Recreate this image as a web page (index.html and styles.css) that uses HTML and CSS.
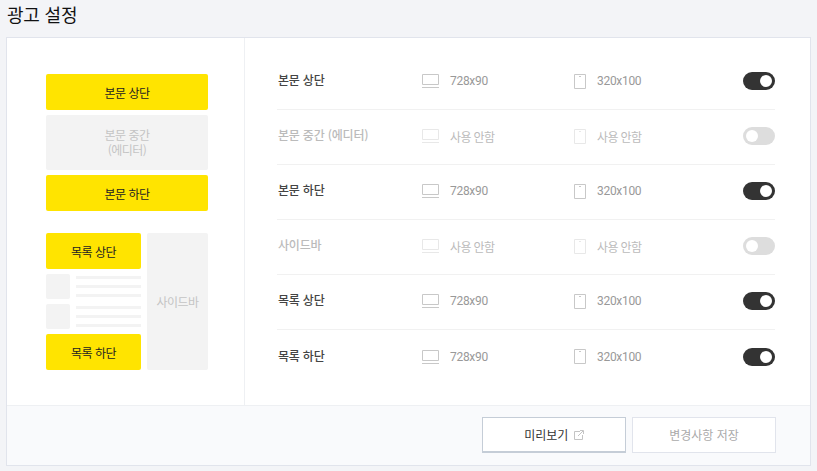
FILE: index.html
```html
<!DOCTYPE html>
<html lang="ko">
<head>
    <meta charset="UTF-8">
    <meta name="viewport" content="width=device-width, initial-scale=1.0">
    <title>광고 설정</title>
    <link rel="stylesheet" href="styles.css">
</head>
<body>
    <h1 class="page-title">광고 설정</h1>
    <div class="card">
        <div class="card-body">
            <div class="preview">
                <div class="slot slot-on">본문 상단</div>
                <div class="slot slot-off slot-tall">본문 중간<br>(에디터)</div>
                <div class="slot slot-on">본문 하단</div>
                <div class="preview-list">
                    <div class="list-col">
                        <div class="slot slot-on">목록 상단</div>
                        <div class="list-item">
                            <div class="thumb"></div>
                            <div class="lines"><span></span><span></span><span></span></div>
                        </div>
                        <div class="list-item">
                            <div class="thumb"></div>
                            <div class="lines"><span></span><span></span><span></span></div>
                        </div>
                        <div class="slot slot-on">목록 하단</div>
                    </div>
                    <div class="slot slot-off slot-side">사이드바</div>
                </div>
            </div>
            <div class="settings">
                <div class="row">
                    <div class="row-name">본문 상단</div>
                    <div class="size size-pc">
                        <svg class="icon" width="17" height="14" viewBox="0 0 17 14"><path d="M.5.5h16v10H.5z" fill="none" stroke="#c8c8c8"/><path d="M0 13.5h17" stroke="#c8c8c8"/></svg>
                        728x90
                    </div>
                    <div class="size size-mobile">
                        <svg class="icon" width="12" height="15" viewBox="0 0 12 15"><path d="M.5.5h11v14H.5z" fill="none" stroke="#c8c8c8"/><path d="M5 2.5h2" stroke="#c8c8c8"/></svg>
                        320x100
                    </div>
                    <div class="toggle toggle-on"></div>
                </div>
                <div class="row row-off">
                    <div class="row-name">본문 중간 (에디터)</div>
                    <div class="size size-pc">
                        <svg class="icon" width="17" height="14" viewBox="0 0 17 14"><path d="M.5.5h16v10H.5z" fill="none" stroke="#c8c8c8"/><path d="M0 13.5h17" stroke="#c8c8c8"/></svg>
                        사용 안함
                    </div>
                    <div class="size size-mobile">
                        <svg class="icon" width="12" height="15" viewBox="0 0 12 15"><path d="M.5.5h11v14H.5z" fill="none" stroke="#c8c8c8"/><path d="M5 2.5h2" stroke="#c8c8c8"/></svg>
                        사용 안함
                    </div>
                    <div class="toggle"></div>
                </div>
                <div class="row">
                    <div class="row-name">본문 하단</div>
                    <div class="size size-pc">
                        <svg class="icon" width="17" height="14" viewBox="0 0 17 14"><path d="M.5.5h16v10H.5z" fill="none" stroke="#c8c8c8"/><path d="M0 13.5h17" stroke="#c8c8c8"/></svg>
                        728x90
                    </div>
                    <div class="size size-mobile">
                        <svg class="icon" width="12" height="15" viewBox="0 0 12 15"><path d="M.5.5h11v14H.5z" fill="none" stroke="#c8c8c8"/><path d="M5 2.5h2" stroke="#c8c8c8"/></svg>
                        320x100
                    </div>
                    <div class="toggle toggle-on"></div>
                </div>
                <div class="row row-off">
                    <div class="row-name">사이드바</div>
                    <div class="size size-pc">
                        <svg class="icon" width="17" height="14" viewBox="0 0 17 14"><path d="M.5.5h16v10H.5z" fill="none" stroke="#c8c8c8"/><path d="M0 13.5h17" stroke="#c8c8c8"/></svg>
                        사용 안함
                    </div>
                    <div class="size size-mobile">
                        <svg class="icon" width="12" height="15" viewBox="0 0 12 15"><path d="M.5.5h11v14H.5z" fill="none" stroke="#c8c8c8"/><path d="M5 2.5h2" stroke="#c8c8c8"/></svg>
                        사용 안함
                    </div>
                    <div class="toggle"></div>
                </div>
                <div class="row">
                    <div class="row-name">목록 상단</div>
                    <div class="size size-pc">
                        <svg class="icon" width="17" height="14" viewBox="0 0 17 14"><path d="M.5.5h16v10H.5z" fill="none" stroke="#c8c8c8"/><path d="M0 13.5h17" stroke="#c8c8c8"/></svg>
                        728x90
                    </div>
                    <div class="size size-mobile">
                        <svg class="icon" width="12" height="15" viewBox="0 0 12 15"><path d="M.5.5h11v14H.5z" fill="none" stroke="#c8c8c8"/><path d="M5 2.5h2" stroke="#c8c8c8"/></svg>
                        320x100
                    </div>
                    <div class="toggle toggle-on"></div>
                </div>
                <div class="row">
                    <div class="row-name">목록 하단</div>
                    <div class="size size-pc">
                        <svg class="icon" width="17" height="14" viewBox="0 0 17 14"><path d="M.5.5h16v10H.5z" fill="none" stroke="#c8c8c8"/><path d="M0 13.5h17" stroke="#c8c8c8"/></svg>
                        728x90
                    </div>
                    <div class="size size-mobile">
                        <svg class="icon" width="12" height="15" viewBox="0 0 12 15"><path d="M.5.5h11v14H.5z" fill="none" stroke="#c8c8c8"/><path d="M5 2.5h2" stroke="#c8c8c8"/></svg>
                        320x100
                    </div>
                    <div class="toggle toggle-on"></div>
                </div>
            </div>
        </div>
        <div class="card-footer">
            <button class="btn btn-preview">미리보기
                <svg class="btn-icon" width="10" height="10" viewBox="0 0 10 10"><path d="M6 1.5H.5v8h8V5M4 6l5-5M6 .5h3.5V4" fill="none" stroke="#c4c4c4"/></svg>
            </button>
            <button class="btn btn-save">변경사항 저장</button>
        </div>
    </div>
</body>
</html>
```

FILE: styles.css
```css
* {
    box-sizing: border-box;
}

html,
body {
    height: 100%;
}

body {
    margin: 0;
    padding: 0 6px;
    background-color: #f3f4f7;
    font-family: "Noto Sans CJK KR", Roboto, sans-serif;
    overflow: hidden;
}

.page-title {
    margin: 0;
    padding-left: 1px;
    height: 37px;
    font-size: 18px;
    font-weight: 400;
    line-height: 28px;
    letter-spacing: -0.2px;
    color: #111;
}

.card {
    height: 429px;
    background-color: #fff;
    border: 1px solid #e1e4ec;
    display: flex;
    flex-direction: column;
}

.card-body {
    display: flex;
    height: 368px;
    border-bottom: 1px solid #eef0f3;
}

.preview {
    width: 238px;
    padding: 36px 36px 0 39px;
    border-right: 1px solid #eef0f3;
    display: flex;
    flex-direction: column;
    gap: 5px;
}

.slot {
    height: 36px;
    border-radius: 2px;
    display: flex;
    align-items: center;
    justify-content: center;
    text-align: center;
    font-size: 12px;
    line-height: 15px;
    letter-spacing: -0.5px;
}

.slot-on {
    background-color: #ffe400;
    color: #222;
}

.slot-off {
    background-color: #f3f3f3;
    color: #c4c4c4;
}

.slot-tall {
    height: 55px;
    padding-bottom: 2px;
}

.preview-list {
    display: flex;
    gap: 6px;
    margin-top: 17px;
}

.list-col {
    width: 95px;
    display: flex;
    flex-direction: column;
    gap: 5px;
}

.slot-side {
    width: 61px;
    height: 137px;
}

.list-item {
    display: flex;
    gap: 6px;
    height: 25px;
}

.thumb {
    width: 24px;
    height: 25px;
    border-radius: 2px;
    background-color: #f3f3f3;
}

.lines {
    flex: 1;
    padding-top: 2px;
    display: flex;
    flex-direction: column;
    gap: 6px;
}

.lines span {
    display: block;
    height: 3px;
    background-color: #f3f3f3;
}

.settings {
    flex: 1;
    padding: 17px 35px 0 32px;
}

.row {
    height: 55px;
    display: flex;
    align-items: center;
    border-bottom: 1px solid #f1f1f1;
    padding-bottom: 2px;
    font-size: 12px;
}

.row:last-child {
    border-bottom: none;
}

.row-name {
    width: 145px;
    padding-left: 1px;
    margin-top: -3px;
    font-weight: 500;
    letter-spacing: -0.2px;
    color: #444;
}

.size {
    display: flex;
    align-items: center;
    color: #999;
    letter-spacing: -0.3px;
    font-family: Roboto, "Noto Sans CJK KR", sans-serif;
}

.row-off .size {
    letter-spacing: -0.5px;
}

.size-pc {
    width: 152px;
}

.size-mobile {
    flex: 1;
}

.icon {
    flex-shrink: 0;
    margin-right: 11px;
}

.toggle {
    position: relative;
    width: 32px;
    height: 18px;
    border-radius: 9px;
    background-color: #ddd;
}

.toggle::after {
    content: "";
    position: absolute;
    top: 3px;
    left: 3px;
    width: 12px;
    height: 12px;
    border-radius: 50%;
    background-color: #fff;
}

.toggle-on {
    background-color: #333;
}

.toggle-on::after {
    left: auto;
    right: 3px;
}

.row-off .row-name,
.row-off .size {
    color: #bbb;
}

.row-off .icon {
    opacity: 0.4;
}

.card-footer {
    flex: 1;
    background-color: #f9fafc;
    display: flex;
    justify-content: flex-end;
    align-items: center;
    gap: 6px;
    padding: 0 34px 2px 0;
}

.btn {
    width: 144px;
    height: 36px;
    background-color: #fff;
    font-family: "Noto Sans CJK KR", sans-serif;
    font-size: 12px;
}

.btn-preview {
    border: 1px solid #c5cdd7;
    border-bottom-width: 2px;
    color: #333;
}

.btn-save {
    border: 1px solid #e1e4ec;
    color: #aaa;
}

.btn-icon {
    margin-left: 2px;
}
```
